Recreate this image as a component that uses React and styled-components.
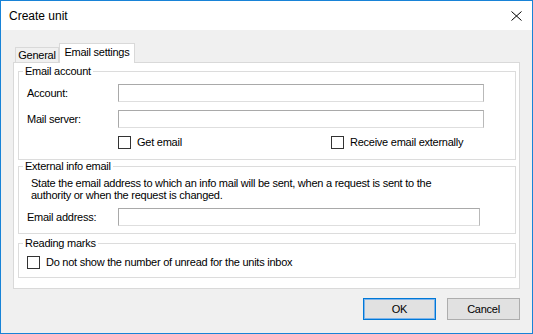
import styled, { createGlobalStyle } from "styled-components";

const GlobalStyle = createGlobalStyle`
  html, body {
    margin: 0;
    padding: 0;
    background: #ffffff;
  }
  body {
    font-family: "Liberation Sans", Arial, sans-serif;
    font-size: 11px;
    letter-spacing: -0.25px;
    color: #000000;
  }
  * {
    box-sizing: border-box;
  }
`;

function App() {
  return (
    <>
      <GlobalStyle />
      <Window>
        <TitleBar>
          <Title>Create unit</Title>
          <CloseIcon width="11" height="10" viewBox="0 0 11 10">
            <path d="M0.5 0.5 L10.5 9.5 M10.5 0.5 L0.5 9.5" stroke="#000" strokeWidth="1" fill="none" />
          </CloseIcon>
        </TitleBar>
        <Body>
          <Tabs>
            <Tab width={44}>General</Tab>
            <Tab width={76} active>Email settings</Tab>
          </Tabs>
          <Panel>
            <Group pb={10}>
              <Legend>Email account</Legend>
              <Row>
                <FieldLabel>Account:</FieldLabel>
                <TextBox width={366} />
              </Row>
              <Row gapAfter>
                <FieldLabel>Mail server:</FieldLabel>
                <TextBox width={366} />
              </Row>
              <CheckGrid>
                <Check>
                  <Box />
                  Get email
                </Check>
                <Check>
                  <Box />
                  Receive email externally
                </Check>
              </CheckGrid>
            </Group>

            <Group pb={7} top={0}>
              <Legend>External info email</Legend>
              <Description>
                State the email address to which an info mail will be sent, when a request is sent to the
                <br />
                authority or when the request is changed.
              </Description>
              <Row>
                <FieldLabel>Email address:</FieldLabel>
                <TextBox width={362} />
              </Row>
            </Group>

            <Group pb={8} top={3}>
              <Legend>Reading marks</Legend>
              <Check>
                <Box />
                Do not show the number of unread for the units inbox
              </Check>
            </Group>
          </Panel>
          <Footer>
            <Button primary>OK</Button>
            <Button>Cancel</Button>
          </Footer>
        </Body>
      </Window>
    </>
  );
}

export default App;

const Window = styled.div`
  width: 533px;
  height: 334px;
  border: 1px solid #1883d7;
  background: #f0f0f0;
  display: flex;
  flex-direction: column;
  overflow: hidden;
`;

const TitleBar = styled.div`
  height: 29px;
  flex: none;
  background: #ffffff;
  display: flex;
  align-items: center;
  justify-content: space-between;
  padding: 0 10px 0 8px;
`;

const Title = styled.span`
  font-size: 12px;
  line-height: 16px;
  letter-spacing: 0;
`;

const CloseIcon = styled.svg`
  display: block;
  margin-top: 1px;
`;

const Body = styled.div`
  flex: 1;
  padding: 13px 12px 0 12px;
  display: flex;
  flex-direction: column;
`;

const Tabs = styled.div`
  display: flex;
  align-items: flex-end;
  height: 19px;
  margin-left: 2px;
`;

const Tab = styled.div`
  position: relative;
  z-index: 1;
  width: ${(p) => p.width}px;
  height: ${(p) => (p.active ? 20 : 15)}px;
  margin-bottom: ${(p) => (p.active ? -1 : 0)}px;
  background: ${(p) => (p.active ? "#ffffff" : "#f0f0f0")};
  border: 1px solid #d9d9d9;
  border-bottom: none;
  text-align: center;
  line-height: ${(p) => (p.active ? 17 : 14)}px;
  white-space: nowrap;
`;

const Panel = styled.div`
  background: #ffffff;
  border: 1px solid #d9d9d9;
  padding: 2px 3px 10px 4px;
  display: flex;
  flex-direction: column;
`;

const Group = styled.fieldset`
  margin: ${(p) => p.top || 0}px 0 0 0;
  min-width: 0;
  border: 1px solid #dcdcdc;
  padding: 6px 8px ${(p) => p.pb}px 8px;
`;

const Legend = styled.legend`
  padding: 0 2px;
  margin-left: -4px;
  line-height: 13px;
  font-size: 11px;
`;

const Row = styled.div`
  display: flex;
  align-items: center;
  height: 18px;
  margin-top: ${(p) => (p.gapAfter ? 8 : 0)}px;
  margin-bottom: ${(p) => (p.gapAfter ? 8 : 0)}px;
`;

const FieldLabel = styled.span`
  flex: none;
  width: 91px;
  line-height: 13px;
`;

const TextBox = styled.div`
  flex: none;
  width: ${(p) => p.width}px;
  height: 18px;
  background: #ffffff;
  border: 1px solid #a9a9a9;
  border-bottom-color: #dedede;
  border-right-color: #b9b9b9;
`;

const CheckGrid = styled.div`
  display: grid;
  grid-template-columns: 213px auto;
  margin-left: 91px;
`;

const Check = styled.label`
  display: flex;
  align-items: center;
  gap: 6px;
  line-height: 13px;
  white-space: nowrap;
`;

const Box = styled.span`
  flex: none;
  width: 13px;
  height: 13px;
  border: 1px solid #333333;
  background: #ffffff;
`;

const Description = styled.div`
  padding-left: 4px;
  margin-top: -2px;
  line-height: 12px;
  margin-bottom: 7px;
`;

const Footer = styled.div`
  display: flex;
  justify-content: flex-end;
  gap: 11px;
  margin-top: 9px;
`;

const Button = styled.div`
  width: 73px;
  height: 22px;
  background: #e1e1e1;
  border: 1px solid ${(p) => (p.primary ? "#0078d7" : "#adadad")};
  box-shadow: ${(p) => (p.primary ? "inset 0 0 0 1px #7eb4ea" : "none")};
  display: flex;
  align-items: center;
  justify-content: center;
  line-height: 13px;
`;
